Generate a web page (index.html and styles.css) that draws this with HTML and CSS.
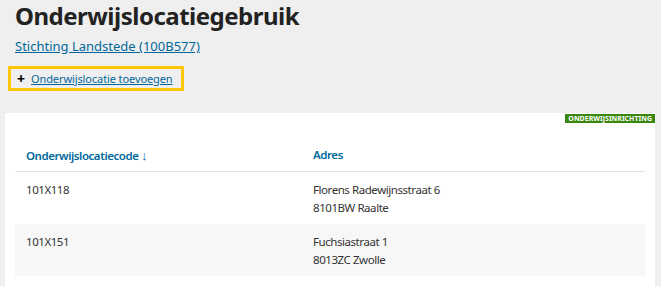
FILE: index.html
```html
<!DOCTYPE html>
<html lang="nl">
<head>
<meta charset="utf-8">
<title>Onderwijslocatiegebruik</title>
<link rel="stylesheet" href="styles.css">
</head>
<body>
<main class="page">
  <div class="intro">
    <h1 class="title">Onderwijslocatiegebruik</h1>
    <p class="org"><a class="link" href="#">Stichting Landstede (100B577)</a></p>
  </div>
  <div class="add">
    <span class="plus">+</span>
    <a class="add-link" href="#">Onderwijslocatie toevoegen</a>
  </div>
  <section class="card">
    <span class="badge">ONDERWIJSINRICHTING</span>
    <table class="table">
      <thead>
        <tr>
          <th class="col-code">Onderwijslocatiecode <span class="arrow">↓</span></th>
          <th>Adres</th>
        </tr>
      </thead>
      <tbody>
        <tr>
          <td>101X118</td>
          <td>Florens Radewijnsstraat 6<br>8101BW Raalte</td>
        </tr>
        <tr class="alt">
          <td>101X151</td>
          <td>Fuchsiastraat 1<br>8013ZC Zwolle</td>
        </tr>
      </tbody>
    </table>
  </section>
</main>
</body>
</html>
```
FILE: styles.css
```css
html, body {
  margin: 0;
  padding: 0;
  background: #efefef;
}
body {
  font-family: "Noto Sans", "Open Sans", sans-serif;
  color: #333;
}
.page {
  padding: 0 6px 0 5px;
}
.intro {
  padding-left: 10px;
}
.title {
  margin: 0;
  padding-top: 2px;
  font-size: 24px;
  line-height: 28px;
  font-weight: 700;
  letter-spacing: -0.5px;
  color: #222;
}
.org {
  margin: 7px 0 0;
  font-size: 13px;
  line-height: 18px;
}
.link {
  color: #01689b;
  text-decoration: underline;
}
.add {
  margin: 11px 0 0 3px;
  width: 164px;
  height: 19px;
  border: 3px solid #ffc800;
  display: flex;
  align-items: center;
  gap: 6px;
  padding-left: 6px;
  box-sizing: content-box;
  font-size: 11px;
}
.plus {
  font-weight: 700;
  font-size: 14px;
  color: #000;
  line-height: 1;
}
.add-link {
  color: #01689b;
  text-decoration: underline;
  letter-spacing: -0.1px;
}
.card {
  position: relative;
  margin-top: 22px;
  background: #fff;
  padding: 25px 10px 20px;
}
.badge {
  position: absolute;
  top: 1px;
  right: 0;
  background: #39870c;
  color: #fff;
  font-size: 7px;
  font-weight: 700;
  line-height: 9px;
  padding: 0 3px;
}
.table {
  width: 100%;
  border-collapse: collapse;
  font-size: 11.5px;
  letter-spacing: -0.44px;
}
.table th {
  text-align: left;
  color: #01689b;
  font-weight: 600;
  height: 33px;
  padding: 0 11px;
  border-bottom: 1px solid #e3e3e3;
}
.table .col-code {
  width: 265px;
}
.arrow {
  font-size: 13px;
  font-weight: 400;
}
.table td {
  vertical-align: top;
  padding: 9px 11px 7px;
  line-height: 18px;
}
.table tr.alt td {
  background: #f7f7f7;
}
```
